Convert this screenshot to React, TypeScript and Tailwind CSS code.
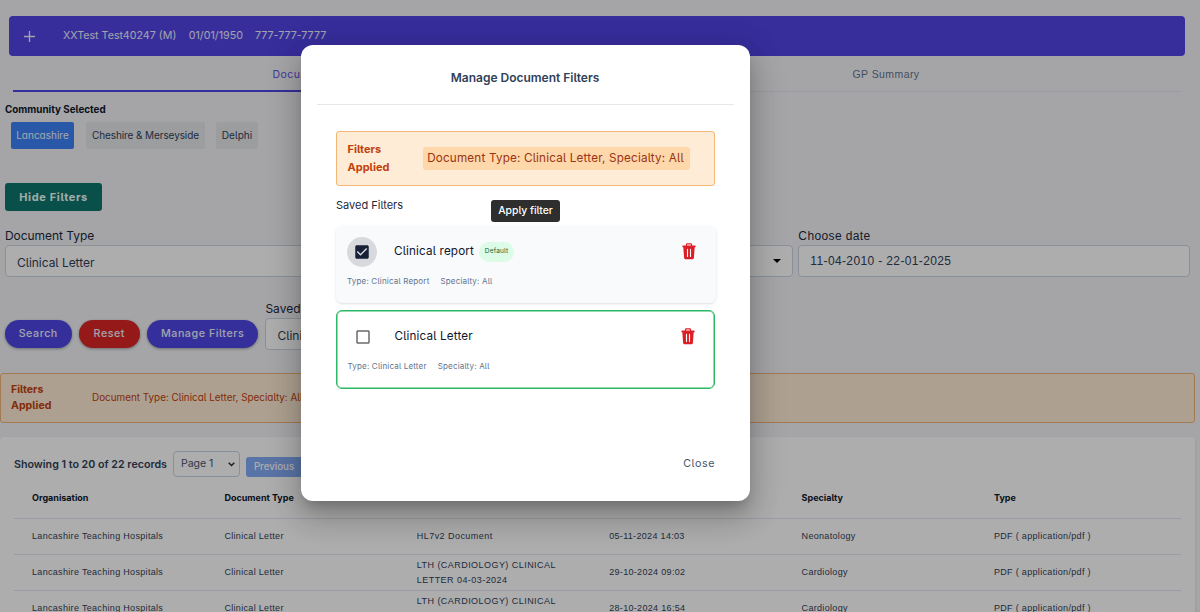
import React from 'react';
import clsx from 'clsx';

interface SavedFilter {
  name: string;
  type: string;
  specialty: string;
  isDefault?: boolean;
  isActive?: boolean;
}

const savedFilters: SavedFilter[] = [
  { name: 'Clinical report', type: 'Clinical Report', specialty: 'All', isDefault: true },
  { name: 'Clinical Letter', type: 'Clinical Letter', specialty: 'All', isActive: true },
];

const columns = ['Organisation', 'Document Type', '', '', 'Specialty', 'Type'];

const rows = [
  ['Lancashire Teaching Hospitals', 'Clinical Letter', 'HL7v2 Document', '05-11-2024 14:03', 'Neonatology', 'PDF ( application/pdf )'],
  ['Lancashire Teaching Hospitals', 'Clinical Letter', 'LTH (CARDIOLOGY) CLINICAL LETTER 04-03-2024', '29-10-2024 09:02', 'Cardiology', 'PDF ( application/pdf )'],
  ['Lancashire Teaching Hospitals', 'Clinical Letter', 'LTH (CARDIOLOGY) CLINICAL', '28-10-2024 16:54', 'Cardiology', 'PDF ( application/pdf )'],
];

const TrashIcon = () => (
  <svg width="14" height="17" viewBox="0 0 14 17" className="text-[#dc1f26]">
    <path d="M4.4 3V1.8Q4.4.9 5.3.9h3.4q.9 0 .9.9V3" fill="none" stroke="currentColor" strokeWidth="1.1" />
    <path d="M.9 2.6h12.2q.5 0 .5.5v.7q0 .5-.5.5H.9q-.5 0-.5-.5v-.7q0-.5.5-.5z" fill="currentColor" />
    <path d="M1.3 4h11.4l-.8 10.7q-.1 1.5-1.5 1.5H3.6q-1.4 0-1.5-1.5z" fill="currentColor" />
    <path d="M5.5 6.4v7M8.5 6.4v7" stroke="#fff" strokeWidth="1.1" strokeLinecap="round" />
  </svg>
);

const Checkbox = ({ checked }: { checked?: boolean }) => (
  <span className={clsx('flex size-[30px] items-center justify-center rounded-full', checked && 'bg-[#d7d9dd]')}>
    <svg width="18" height="18" viewBox="0 0 24 24">
      {checked ? (
        <path
          fill="#172037"
          d="M19 3H5c-1.11 0-2 .9-2 2v14c0 1.1.89 2 2 2h14c1.11 0 2-.9 2-2V5c0-1.1-.89-2-2-2zm-9 14l-5-5 1.41-1.41L10 14.17l7.59-7.59L19 8l-9 9z"
        />
      ) : (
        <path
          fill="#6b6b6b"
          d="M19 5v14H5V5h14m0-2H5c-1.1 0-2 .9-2 2v14c0 1.1.9 2 2 2h14c1.1 0 2-.9 2-2V5c0-1.1-.9-2-2-2z"
        />
      )}
    </svg>
  </span>
);

interface FieldProps {
  label: string;
  value: string;
  select?: boolean;
  className?: string;
}

const Field = ({ label, value, select, className }: FieldProps) => (
  <div className={clsx('min-w-0 text-[12px] text-slate-800', className)}>
    <div className="h-[18px] leading-[18px]">{label}</div>
    <div className="flex h-8 items-center justify-between rounded border border-slate-300 bg-white px-[11px] text-slate-700">
      <span className={clsx(select && 'pt-1')}>{value}</span>
      {select && <span className="border-x-[4px] border-t-[4px] border-x-transparent border-t-black" />}
    </div>
  </div>
);

const PatientBar = () => (
  <header className="ml-[9px] mr-[15px] flex h-10 items-center rounded bg-[#5143e5] pl-[15px] text-[10.7px] text-indigo-50">
    <svg width="11" height="11" viewBox="0 0 11 11">
      <path d="M5.5 0v11M0 5.5h11" stroke="currentColor" strokeWidth="1.3" />
    </svg>
    <span className="ml-7 pt-px">XXTest Test40247 (M)</span>
    <span className="ml-[12.5px] pt-px">01/01/1950</span>
    <span className="ml-3 pt-px">777-777-7777</span>
  </header>
);

const Tabs = () => (
  <nav className="ml-[13px] mr-[19px] flex h-[36px] pt-px text-[10.5px] tracking-[0.05em]">
    <div className="flex flex-1 items-center justify-center border-b-2 border-[#4f46e5] pr-[3px] pt-[2px] text-[#5b52e5]">Documents</div>
    <div className="flex flex-1 items-center justify-center border-b border-slate-200 pr-[5px] pt-px font-['Liberation_Sans'] tracking-[0.04em] text-slate-500">
      GP Summary
    </div>
  </nav>
);

const DocumentsTable = () => (
  <section className="mr-[5px] mt-[14px] h-[200px] rounded bg-white px-[14px] pt-[14px] shadow-sm">
    <div className="flex h-[30px]">
      <span className="mt-[5px] w-[159px] text-[10.7px] font-semibold leading-[18px] text-slate-700">Showing 1 to 20 of 22 records</span>
      <div className="flex h-[26px] w-[67px] items-center justify-between rounded border border-slate-300 pl-[7px] pr-1 text-[10.5px] text-slate-600">
        Page 1
        <svg width="7" height="5" viewBox="0 0 7 5">
          <path d="M.7.8l2.8 2.8L6.3.8" fill="none" stroke="#1f2937" strokeWidth="1.4" />
        </svg>
      </div>
      <button className="ml-[6px] mt-[6px] h-5 w-[58px] rounded-[3px] bg-[#83acf5] pr-[2px] text-[9.7px] font-medium text-white">Previous</button>
    </div>
    <div className="text-[9px] text-slate-700">
      <div className="grid h-[38px] grid-cols-[repeat(6,192.4px)] items-center border-b border-slate-200 pb-[4px] pl-[18px] pt-px font-bold text-slate-900">
        {columns.map((c, i) => <div key={i}>{c}</div>)}
      </div>
      {rows.map((row, i) => (
        <div
          key={i}
          className="grid h-9 grid-cols-[repeat(6,192.4px)] items-center border-b border-slate-200 pl-[18px] font-['Liberation_Sans'] leading-[15px] tracking-[0.32px]"
        >
          {row.map((cell, j) => (
            <div key={j} className={clsx('min-h-[15px] pr-9', j === 2 && 'tracking-[0.45px]', i === 2 && j === 2 && 'pb-[15px]')}>{cell}</div>
          ))}
        </div>
      ))}
    </div>
  </section>
);

const FilterCard = ({ filter }: { filter: SavedFilter }) => (
  <div
    className={clsx(
      'rounded-md',
      filter.isActive
        ? 'mr-[2px] mt-[7px] h-[78.5px] border-[1.5px] border-[#2cb765] bg-white pl-[10.5px] pr-[19px] pt-[10px] ring-[0.5px] ring-inset ring-[#2cb765]'
        : 'mr-px h-[77px] bg-[#f9fafc] pl-[11px] pr-5 pt-[10px] shadow-sm'
    )}
  >
    <div className="flex h-[31px] items-center">
      <Checkbox checked={filter.isDefault} />
      <span className="ml-[17px] pt-px text-[11.7px] tracking-[0.15px] text-slate-900">{filter.name}</span>
      {filter.isDefault && (
        <span className="ml-[5px] flex h-5 w-[35px] items-center justify-center rounded-full bg-[#dcfce7] pt-px text-[6.5px] tracking-[0.2px] text-[#166534]">
          Default
        </span>
      )}
      <span className="ml-auto">
        <TrashIcon />
      </span>
    </div>
    <div className="mt-[7px] flex gap-[11px] text-[8px] leading-[14px] tracking-[0.18px] text-slate-500">
      <span>Type: {filter.type}</span>
      <span>Specialty: {filter.specialty}</span>
    </div>
  </div>
);

const ManageFiltersModal = () => (
  <div className="absolute left-[301px] top-[45px] h-[456px] w-[449px] rounded-[12px] bg-white px-4 shadow-[0_9px_12px_-5px_rgba(0,0,0,0.2),0_18px_28px_2px_rgba(0,0,0,0.14),0_7px_34px_6px_rgba(0,0,0,0.12)]">
    <h2 className="h-[60px] border-b border-gray-200 pr-px pt-[23.5px] text-center text-[12px] font-semibold leading-[18px] text-slate-700">
      Manage Document Filters
    </h2>
    <div className="ml-[19px] mr-[17px] pt-[26px]">
      <div className="mr-[2px] flex h-[55px] items-center rounded-[3px] border border-[#f3b778] bg-[#ffecd6]">
        <div className="w-[85.5px] pb-[2px] pl-[10.5px] text-[11px] font-bold leading-[18px] text-[#c2410c]">Filters<br />Applied</div>
        <span className="flex h-[23px] w-[267px] items-center justify-center whitespace-nowrap rounded-[3px] bg-[#fed7aa] pr-px text-[11.7px] tracking-[0.18px] text-[#9a3412]">
          Document Type: Clinical Letter, Specialty: All
        </span>
      </div>
      <div className="h-[40px] pt-[10px] text-[11px] leading-[18px] text-slate-800">Saved Filters</div>
      {savedFilters.map((f) => <FilterCard key={f.name} filter={f} />)}
      <div className="mr-[2px] mt-[66.5px] text-right text-[10.7px] leading-[18px] tracking-[0.6px] text-slate-600">Close</div>
    </div>
    <div className="absolute left-[190px] top-[155px] flex h-[22px] w-[69px] items-center justify-center rounded-[3px] bg-[#2e2e2e] text-[10.4px] font-medium text-white">
      Apply filter
    </div>
  </div>
);

const pill = 'mb-[2px] flex h-7 items-center justify-center rounded-full text-[10.7px] font-medium tracking-[0.55px] text-indigo-50 shadow-[0_1px_3px_rgba(0,0,0,0.35)]';

export default function App() {
  return (
    <div className="relative h-[612px] w-full overflow-hidden bg-[#f3f4f8] pt-4 font-['Inter',sans-serif] [font-feature-settings:'cv05']">
      <PatientBar />
      <Tabs />

      <div className="pl-[5px] pr-[10px]">
        <div className="mt-2 h-[18px] text-[9.85px] font-bold leading-[18px] text-slate-900">Community Selected</div>
        <div className="ml-[6px] mt-1 flex h-[27px] text-[10px] text-slate-700 [font-feature-settings:'cv05','cv11']">
          <span className="flex w-[63px] items-center justify-center rounded-[2px] bg-[#3b82f6] text-blue-50">Lancashire</span>
          <span className="ml-3 flex w-[119px] items-center justify-center rounded-[2px] bg-gray-200 tracking-[-0.1px]">Cheshire &amp; Merseyside</span>
          <span className="ml-[11px] flex w-[42px] items-center justify-center rounded-[2px] bg-gray-200">Delphi</span>
        </div>

        <button className="mt-[34px] flex h-7 w-[97px] items-center justify-center rounded-[3px] bg-[#0f766e] text-[11px] font-bold tracking-[0.65px] text-teal-50">
          Hide Filters
        </button>

        <div className="mt-4 flex gap-[5px]">
          <Field label="Document Type" value="Clinical Letter" select className="flex-1 tracking-[-0.05px]" />
          <Field label="" value="" select className="flex-1" />
          <Field label="Choose date" value="11-04-2010 - 22-01-2025" className="flex-1 font-['Liberation_Sans'] tracking-[0.37px]" />
        </div>

        <div className="mt-[23px] flex h-[50px] items-end gap-[7.3px]">
          <button className={clsx(pill, 'w-[66.5px] bg-[#4f46e5]')}>Search</button>
          <button className={clsx(pill, 'w-[61px] bg-[#dc2626]')}>Reset</button>
          <button className={clsx(pill, 'w-[111px] bg-[#4f46e5]')}>Manage Filters</button>
          <Field label="Saved Filters" value="Clinical Letter" select className="w-[200px]" />
        </div>
      </div>

      <div className="mr-[5px] mt-[23px] flex h-[50px] items-center rounded-[3px] border border-[#f1b47a] bg-[#ffecd4] text-[#c2410c]">
        <div className="w-[91px] pl-[10px] text-[10.6px] font-bold leading-4">Filters<br />Applied</div>
        <span className="pb-[2px] text-[9.9px] [font-feature-settings:'cv05','cv11']">Document Type: Clinical Letter, Specialty: All</span>
      </div>

      <DocumentsTable />

      <div className="absolute inset-0 bg-black/32" />
      <ManageFiltersModal />
    </div>
  );
}
